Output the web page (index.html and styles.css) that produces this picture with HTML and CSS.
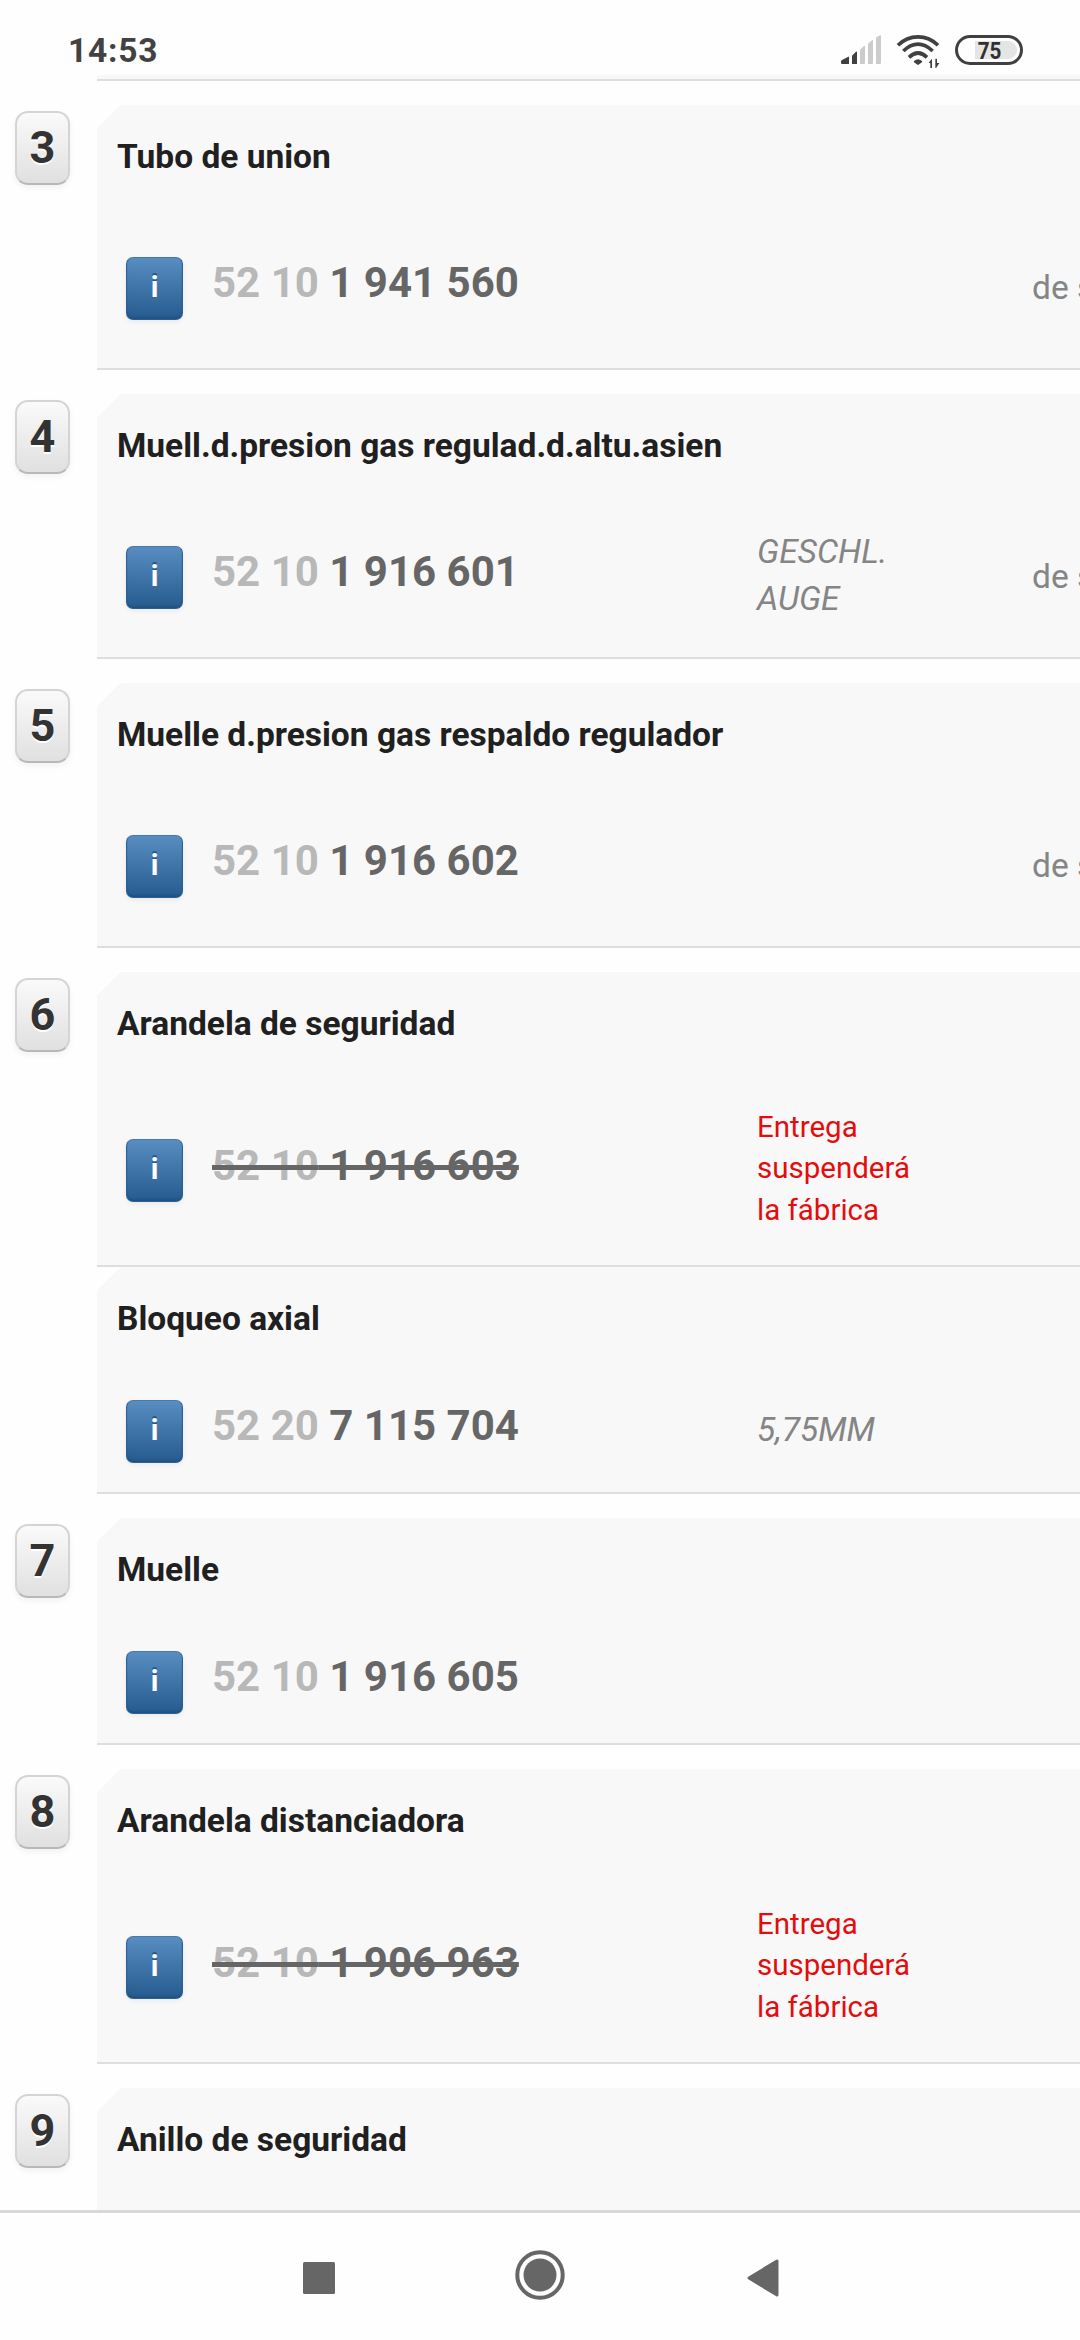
FILE: index.html
```html
<!DOCTYPE html>
<html lang="es">
<head>
<meta charset="utf-8">
<title>Catálogo de piezas</title>
<link rel="stylesheet" href="styles.css">
</head>
<body>
<header class="status">
  <span class="clock">14:53</span>
  <svg class="status-icons" viewBox="0 0 549 93" width="183" height="31">
    <g fill="#404040">
      <path d="M3 87q-3 0-3-3v-5q0-2 3-4l19-10q2-1 2 2v20zM33 87V64q0-3 2-4l10-10q3-2 3 1v36z"/>
      <path d="M231 90l-12-8q-2-3 1-5 11-9 22 0 3 2 1 5z"/>
      <path d="M263 83l10-12v28h-5V85zM283 99V71h5v13h7l-9 14z" />
    </g>
    <g fill="#ccc">
      <path d="M57 87V46q0-2 2-4l10-9q3-2 3 1v50q0 3-3 3zM81 87V28q0-2 2-4l10-8q3-2 3 1v67q0 3-3 3zM105 87V11q0-3 2-5l10-5q3-1 3 2v81q0 3-3 3z"/>
    </g>
    <g fill="none" stroke="#404040" stroke-width="11">
      <path d="M171 31C204-3 258-3 291 31"/>
      <path d="M187 48q44-41 88 0"/>
      <path d="M204 67q27-26 54 0"/>
    </g>
    <path fill="#e5e5e5" d="M402 18H501a27 27 0 0 1 0 54H402z"/>
    <rect x="346.500" y="4.500" width="195" height="81" rx="40.500" fill="none" stroke="#404040" stroke-width="9"/>
    <text class="charge" x="410" y="72" textLength="71" lengthAdjust="spacingAndGlyphs">75</text>
  </svg>
</header>

<main class="list">
  <div class="card-tail"></div>
  <section class="item">
    <div class="badge">3</div>
    <article class="card">
      <h2>Tubo de union</h2>
      <div class="row">
        <button class="info">i</button>
        <div class="number"><span>52 10</span> 1 941 560</div>
        <div class="note"></div>
        <div class="usage">de s</div>
      </div>
    </article>
  </section>
  <section class="item">
    <div class="badge">4</div>
    <article class="card">
      <h2>Muell.d.presion gas regulad.d.altu.asien</h2>
      <div class="row">
        <button class="info">i</button>
        <div class="number"><span>52 10</span> 1 916 601</div>
        <div class="note">GESCHL.<br>AUGE</div>
        <div class="usage">de s</div>
      </div>
    </article>
  </section>
  <section class="item">
    <div class="badge">5</div>
    <article class="card">
      <h2>Muelle d.presion gas respaldo regulador</h2>
      <div class="row">
        <button class="info">i</button>
        <div class="number"><span>52 10</span> 1 916 602</div>
        <div class="note"></div>
        <div class="usage">de s</div>
      </div>
    </article>
  </section>
  <section class="item joined">
    <div class="badge">6</div>
    <article class="card">
      <h2>Arandela de seguridad</h2>
      <div class="row tall">
        <button class="info">i</button>
        <div class="number ended"><span>52 10</span> 1 916 603</div>
        <div class="note alert">Entrega<br>suspenderá<br>la fábrica</div>
      </div>
    </article>
  </section>
  <section class="item">
    <div class="badge-space"></div>
    <article class="card">
      <h2>Bloqueo axial</h2>
      <div class="row short">
        <button class="info">i</button>
        <div class="number"><span>52 20</span> 7 115 704</div>
        <div class="note">5,75MM</div>
      </div>
    </article>
  </section>
  <section class="item">
    <div class="badge">7</div>
    <article class="card">
      <h2>Muelle</h2>
      <div class="row short">
        <button class="info">i</button>
        <div class="number"><span>52 10</span> 1 916 605</div>
      </div>
    </article>
  </section>
  <section class="item">
    <div class="badge">8</div>
    <article class="card">
      <h2>Arandela distanciadora</h2>
      <div class="row tall">
        <button class="info">i</button>
        <div class="number ended"><span>52 10</span> 1 906 963</div>
        <div class="note alert">Entrega<br>suspenderá<br>la fábrica</div>
      </div>
    </article>
  </section>
  <section class="item">
    <div class="badge">9</div>
    <article class="card">
      <h2>Anillo de seguridad</h2>
      <div class="row"></div>
    </article>
  </section>
</main>

<nav class="nav">
  <svg viewBox="0 0 32 32" width="32" height="32"><rect width="32" height="32" rx="1.500" fill="#666"/></svg>
  <svg class="home" viewBox="0 0 50 50" width="50" height="50"><circle cx="25" cy="25" r="22.700" fill="none" stroke="#666" stroke-width="4"/><circle cx="25" cy="25" r="16.500" fill="#666"/></svg>
  <svg viewBox="0 0 32 38" width="32" height="38"><path d="M2 19L30 2v34z" fill="#666" stroke="#666" stroke-width="3" stroke-linejoin="round"/></svg>
</nav>
</body>
</html>
```

FILE: styles.css
```css
* {
  box-sizing: border-box;
}

body {
  margin: 0;
  width: 1080px;
  height: 2340px;
  overflow: hidden;
  display: flex;
  flex-direction: column;
  background: #fefefe;
  font-family: Roboto, "Liberation Sans", sans-serif;
}

.status {
  flex: none;
  height: 75px;
  display: flex;
  justify-content: space-between;
  align-items: flex-start;
  padding: 31px 56px 0 68px;
}

.clock {
  font-size: 33.500px;
  line-height: 40px;
  font-weight: 700;
  letter-spacing: 0.800px;
  color: #424242;
}

.status-icons {
  margin-top: 4px;
  overflow: visible;
}

.charge {
  font-size: 72px;
  font-weight: 700;
  fill: #303030;
}

.list {
  flex: 1;
  min-height: 0;
  overflow: hidden;
}

.card-tail {
  height: 6px;
  margin: 0 0 24px 97px;
  background: #f8f8f8;
  border-bottom: 2px solid #dedede;
}

.item {
  display: flex;
  align-items: flex-start;
  margin-bottom: 24px;
}

.item.joined {
  margin-bottom: 0;
}

.badge {
  flex: none;
  width: 55px;
  height: 74px;
  margin: 6px 27px 0 15px;
  border: 2px solid #d4d4d4;
  border-bottom-color: #b8b8b8;
  border-radius: 13px;
  background: linear-gradient(#fafafa, #e0e0e0);
  box-shadow: 0 3px 6px rgba(0, 0, 0, 0.05);
  color: #333;
  font-size: 45px;
  font-weight: 700;
  line-height: 69px;
  text-align: center;
  text-shadow: 0 2px 0 #fff;
}

.badge-space {
  flex: none;
  width: 97px;
}

.card {
  flex: 1;
  min-width: 0;
  border-bottom: 2px solid #dedede;
  background: linear-gradient(135deg, #fefefe 16.500px, #f8f8f8 17px);
}

.card h2 {
  margin: 0;
  height: 104px;
  padding: 31px 0 0 20px;
  font-size: 33.500px;
  line-height: 42px;
  font-weight: 700;
  color: #202020;
  white-space: nowrap;
}

.row {
  display: grid;
  grid-template-columns: 57px 574px 275px 1fr;
  align-items: center;
  height: 159px;
  padding-left: 29px;
}

.row.tall {
  height: 189px;
}

.row.short {
  height: 121px;
}

.info {
  width: 57px;
  height: 63px;
  padding: 0 0 3px;
  border: 1px solid #2b5f95;
  border-top-color: #4779a9;
  border-radius: 7px;
  background: linear-gradient(#588dc2, #265b90);
  box-shadow: 0 2px 5px rgba(0, 0, 0, 0.06), inset 0 -2px 2px rgba(0, 0, 0, 0.12);
  color: #fff;
  font: 700 29px/40px Roboto, sans-serif;
  text-shadow: 0 -2px 0 #23568a;
}

.number {
  padding: 0 0 12px 29px;
  justify-self: start;
  font-size: 42px;
  line-height: 50px;
  font-weight: 700;
  color: #666;
  white-space: nowrap;
}

.number span {
  color: #b8b8b8;
}

.number.ended {
  padding-bottom: 10px;
  text-decoration: line-through;
  text-decoration-thickness: 5px;
}

.note {
  font-size: 33.500px;
  line-height: 47px;
  font-style: italic;
  color: #858585;
  padding-bottom: 5px;
}

.note.alert {
  padding-bottom: 3px;
  font-size: 29.500px;
  line-height: 41.500px;
  font-style: normal;
  color: #e30d0d;
}

.usage {
  font-size: 33.500px;
  line-height: 47px;
  padding-bottom: 2px;
  color: #858585;
  white-space: nowrap;
}

.nav {
  flex: none;
  height: 130px;
  border-top: 3px solid #d8d8d8;
  display: grid;
  grid-template-columns: 32px 50px 32px;
  column-gap: 181px;
  justify-content: start;
  align-items: center;
  padding: 2px 0 0 303px;
}

.nav .home {
  margin: 0 0 6px -1px;
}
```
